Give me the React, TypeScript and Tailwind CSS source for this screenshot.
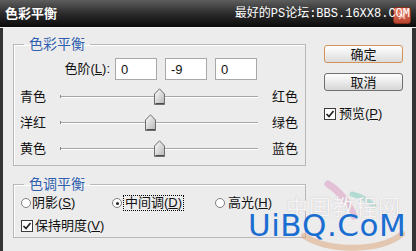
import React from "react";

const sliders = [
  { left: "青色", right: "红色", value: 0 },
  { left: "洋红", right: "绿色", value: -9 },
  { left: "黄色", right: "蓝色", value: 0 },
];

function Key({ label, k }: { label: string; k: string }) {
  return (
    <span>
      {label}(<span className="underline">{k}</span>)
    </span>
  );
}

function Checkbox() {
  return (
    <span className="w-[12px] h-[12px] border border-[#3c3c3c] bg-white flex items-center justify-center shrink-0">
      <svg width="10" height="10" viewBox="0 0 10 10">
        <path d="M1.5 5 L4 7.5 L8.5 2" fill="none" stroke="#222" strokeWidth="1.7" />
      </svg>
    </span>
  );
}

function Radio({ checked }: { checked?: boolean }) {
  return (
    <span className="w-[10px] h-[10px] rounded-full border border-[#808080] bg-white flex items-center justify-center shrink-0">
      {checked && <span className="w-[3px] h-[3px] rounded-full bg-[#222]" />}
    </span>
  );
}

function Slider({ value }: { value: number }) {
  const pos = ((value + 100) / 200) * 198 - 5.5;
  return (
    <div className="relative w-[198px] h-[2px] bg-[#a6a6a6] border-b border-white">
      <span className="absolute left-0 top-[-1px] w-[1px] h-[3px] bg-[#8a8a8a]" />
      <svg
        className="absolute top-[-8px]"
        style={{ left: pos }}
        width="12"
        height="18"
        viewBox="0 0 12 18"
      >
        <defs>
          <linearGradient id="thumb" x1="0" y1="0" x2="1" y2="1">
            <stop offset="0" stopColor="#ffffff" />
            <stop offset="1" stopColor="#b4b4b4" />
          </linearGradient>
        </defs>
        <path
          d="M0.5 6 L5.5 0.8 L10.5 6 L10.5 16.5 L0.5 16.5 Z"
          fill="url(#thumb)"
          stroke="#6e6e6e"
        />
        <path d="M1.5 15.5 L10 15.5" stroke="#4a4a4a" />
      </svg>
    </div>
  );
}

export default function App() {
  return (
    <div className="w-[416px] h-[251px] relative overflow-hidden flex flex-col bg-[#ececec] font-['Liberation_Sans','Noto_Sans_CJK_SC',sans-serif] text-[13px] text-[#111]">
      {/* Title bar */}
      <div className="relative h-[28px] flex items-center justify-between pl-[5px] pr-[6px] bg-linear-to-b from-[#5e5e5e] via-[#2c2c2c] to-[#0c0c0c] border-b border-[#f4f4f4]">
        <span className="text-white font-bold text-[13px] leading-none">色彩平衡</span>
        <span className="absolute right-[5px] top-[7px] w-[18px] h-[17px] rounded-[3px] bg-linear-to-b from-[#e8826a] to-[#b9442e] border border-[#8a2e1e] flex items-center justify-center">
          <svg width="10" height="10" viewBox="0 0 10 10">
            <path d="M2 2 L8 8 M8 2 L2 8" stroke="#f3b8a8" strokeWidth="1.5" />
          </svg>
        </span>
        <span className="relative text-white text-[12px] leading-none font-['Liberation_Mono','Noto_Sans_CJK_SC',monospace]">
          最好的PS论坛:BBS.16XX8.COM
        </span>
      </div>

      {/* Body */}
      <div className="flex-1 flex border-l-[3px] border-r-[4px] border-[#343434]">
        <div className="pl-[10px] pt-[9px]">
          <fieldset className="w-[293px] border border-[#b8b8b8] shadow-[inset_1px_1px_0_#fff] pb-[3px]">
            <legend className="ml-[10px] px-[5px] text-[14px] leading-[14px] text-[#2f5fae]">色彩平衡</legend>
            <div className="mt-[7px] flex items-center h-[22px]">
              <span className="w-[96px] text-right">
                <Key label="色阶" k="L" />:
              </span>
              <div className="ml-[5px] flex gap-[8px]">
                {["0", "-9", "0"].map((v, i) => (
                  <input
                    key={i}
                    readOnly
                    value={v}
                    className="w-[42px] h-[22px] bg-white border border-[#a9a9a9] pl-[5px] text-[13px] outline-none"
                  />
                ))}
              </div>
            </div>
            <div className="mt-[4px]">
              {sliders.map((s) => (
                <div key={s.left} className="h-[26px] flex items-center">
                  <span className="w-[46px] pl-[6px]">{s.left}</span>
                  <Slider value={s.value} />
                  <span className="ml-[14px]">{s.right}</span>
                </div>
              ))}
            </div>
          </fieldset>

          <fieldset className="mt-[11px] w-[293px] border border-[#b8b8b8] shadow-[inset_1px_1px_0_#fff] pb-[4px]">
            <legend className="ml-[10px] px-[5px] text-[14px] leading-[14px] text-[#2f5fae]">色调平衡</legend>
            <div className="mt-[5px] h-[14px] pl-[7px] flex items-center">
              <div className="w-[91px] flex items-center gap-[1px]">
                <Radio />
                <Key label="阴影" k="S" />
              </div>
              <div className="w-[103px] flex items-center gap-[1px]">
                <Radio checked />
                <span className="border border-dotted border-black px-[1px] leading-[14px]">
                  <Key label="中间调" k="D" />
                </span>
              </div>
              <div className="flex items-center gap-[3px]">
                <Radio />
                <Key label="高光" k="H" />
              </div>
            </div>
            <div className="mt-[9px] h-[14px] pl-[7px] flex items-center gap-[2px]">
              <Checkbox />
              <Key label="保持明度" k="V" />
            </div>
          </fieldset>
        </div>

        <div className="ml-[18px] pt-[17px] flex flex-col">
          <button className="w-[79px] h-[18px] rounded-[3px] border border-[#d39358] bg-linear-to-b from-white to-[#dcdcdc] text-[13px] leading-none">
            确定
          </button>
          <button className="mt-[10px] w-[79px] h-[18px] rounded-[3px] border border-[#707070] bg-linear-to-b from-white to-[#d6d6d6] text-[13px] leading-none">
            取消
          </button>
          <div className="mt-[16px] h-[13px] flex items-center gap-[3px]">
            <Checkbox />
            <Key label="预览" k="P" />
          </div>
        </div>
      </div>

      {/* Watermark */}
      <svg className="absolute left-[290px] top-[180px] pointer-events-none" width="122" height="71" viewBox="0 0 122 71">
        <path d="M38 4 C48 10 58 22 64 36" stroke="#dc9cc4" strokeWidth="7" fill="none" opacity="0.55" strokeLinecap="round" />
        <path d="M62 14 C70 16 78 20 84 26" stroke="#82cdbf" strokeWidth="5" fill="none" opacity="0.55" strokeLinecap="round" />
        <path d="M14 56 C40 72 90 72 112 54" stroke="#d9a274" strokeWidth="6" fill="none" opacity="0.5" strokeLinecap="round" />
      </svg>
      <span className="absolute left-[286px] top-[194px] text-[22px] leading-none tracking-[1px] text-[#f7f3f6] [text-shadow:0_0_1px_#b9b9b9] font-['Noto_Sans_CJK_SC',sans-serif] pointer-events-none">
        中国教程网
      </span>
      <span className="absolute left-[248px] top-[210px] text-[31px] leading-none tracking-[0.5px] text-[#1a6ed2] font-['DejaVu_Sans',sans-serif] pointer-events-none">
        UiBQ.CoM
      </span>
    </div>
  );
}
